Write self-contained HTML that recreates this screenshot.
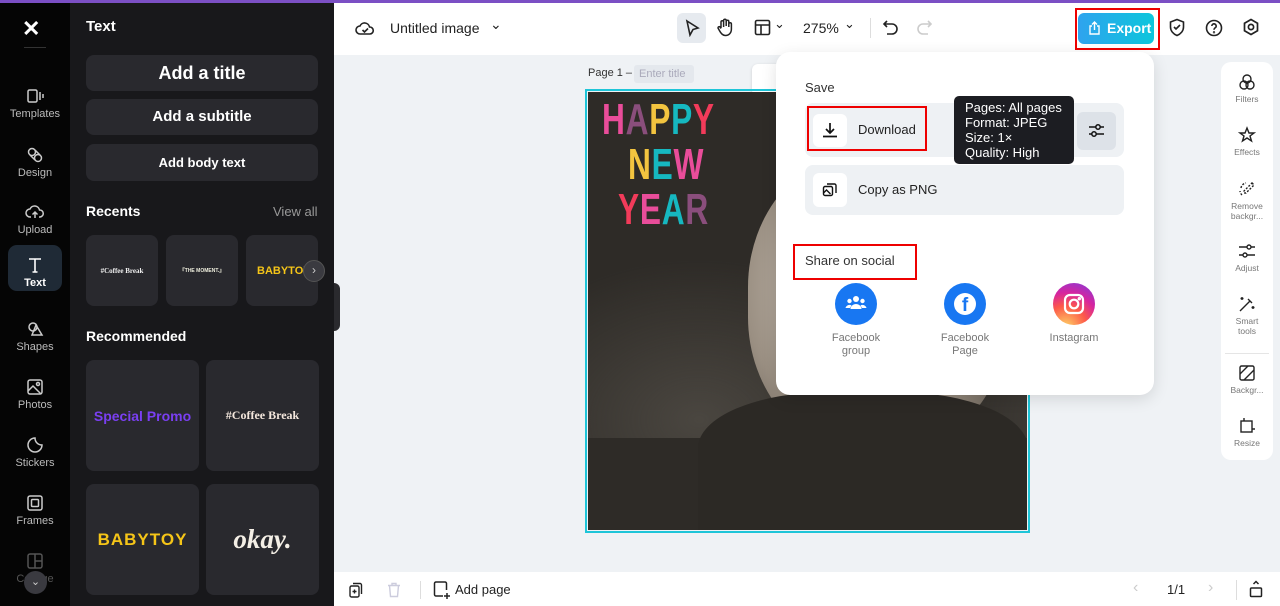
<!DOCTYPE html>
<html><head><meta charset="utf-8"><style>
*{box-sizing:border-box;margin:0;padding:0}
body{width:1280px;height:606px;overflow:hidden;font-family:"Liberation Sans",sans-serif;position:relative;background:#eff2f5}
.abs{position:absolute}
.rail{left:0;top:0;width:70px;height:606px;background:#050505}
.panel{left:70px;top:0;width:264px;height:606px;background:#18181b;color:#fff}
.ri{position:absolute;left:0;width:70px;text-align:center;color:#bbb;font-size:11px}
.ri svg{display:block;margin:0 auto 3px}
.btn{position:absolute;left:16px;width:232px;background:#29292e;border-radius:8px;color:#fff;font-weight:bold;text-align:center}
.card{position:absolute;background:#29292e;border-radius:8px;display:flex;align-items:center;justify-content:center;font-weight:bold}
.hdr{left:334px;top:3px;width:946px;height:52px;background:#fff}
.bot{left:334px;top:572px;width:946px;height:34px;background:#fff}
.rt{position:absolute;left:0;width:52px;text-align:center;font-size:8.5px;color:#777;line-height:10px}
.rt svg{display:block;margin:0 auto 3px}
.hny{position:absolute;font:bold 44px 'Liberation Sans';letter-spacing:1px;line-height:45px;transform:scaleX(0.72);transform-origin:0 0;white-space:nowrap}
</style></head><body>
<div class="abs" style="left:0;top:0;width:1280px;height:3px;background:#7b4fc4;z-index:5"></div>
<div class="abs rail">
 <div class="abs" style="left:22px;top:16px;color:#fff;font-size:22px;font-weight:bold">✕</div>
 <div class="abs" style="left:24px;top:47px;width:22px;height:1px;background:#333"></div>
 <div class="ri" style="top:87px"><svg width="18" height="18" viewBox="0 0 18 18" fill="none" stroke="#ccc" stroke-width="1.5"><rect x="2" y="3" width="9" height="12" rx="1.5"/><path d="M14 5v8M17 7v4"/></svg>Templates</div>
 <div class="ri" style="top:146px"><svg width="18" height="18" viewBox="0 0 18 18" fill="none" stroke="#ccc" stroke-width="1.5"><circle cx="6" cy="6" r="3.5"/><circle cx="12" cy="12" r="3.5"/><path d="M9 4l5 5M4 9l5 5"/></svg>Design</div>
 <div class="ri" style="top:203px"><svg width="20" height="18" viewBox="0 0 20 18" fill="none" stroke="#ccc" stroke-width="1.5"><path d="M6 14H5a4 4 0 010-8 5 5 0 019.5 1A3.5 3.5 0 0115 14h-1M10 15V9M7.5 11.5L10 9l2.5 2.5"/></svg>Upload</div>
 <div class="abs" style="left:8px;top:245px;width:54px;height:46px;border-radius:9px;background:#1f2a36"></div>
 <div class="ri" style="top:256px;color:#fff;font-weight:bold"><svg width="18" height="18" viewBox="0 0 18 18" fill="none" stroke="#fff" stroke-width="1.6"><path d="M3 3h12M9 3v13M6.5 16h5"/></svg>Text</div>
 <div class="ri" style="top:320px"><svg width="18" height="18" viewBox="0 0 18 18" fill="none" stroke="#ccc" stroke-width="1.5"><circle cx="7" cy="7" r="4"/><path d="M10 5l6 10H6z"/></svg>Shapes</div>
 <div class="ri" style="top:378px"><svg width="18" height="18" viewBox="0 0 18 18" fill="none" stroke="#ccc" stroke-width="1.5"><rect x="2" y="2" width="14" height="14" rx="2"/><path d="M2 13l5-5 8 8"/><circle cx="12" cy="6" r="1.5"/></svg>Photos</div>
 <div class="ri" style="top:436px"><svg width="18" height="18" viewBox="0 0 18 18" fill="none" stroke="#ccc" stroke-width="1.5"><path d="M16 9a7 7 0 11-7-7c0 4 3 7 7 7z"/></svg>Stickers</div>
 <div class="ri" style="top:494px"><svg width="18" height="18" viewBox="0 0 18 18" fill="none" stroke="#ccc" stroke-width="1.5"><rect x="2" y="2" width="14" height="14" rx="2"/><rect x="5.5" y="5.5" width="7" height="7" rx="1"/></svg>Frames</div>
 <div class="ri" style="top:552px;color:#555"><svg width="18" height="18" viewBox="0 0 18 18" fill="none" stroke="#555" stroke-width="1.5"><rect x="2" y="2" width="14" height="14" rx="2"/><path d="M9 2v14M9 9h7"/></svg>Collage</div>
 <div class="abs" style="left:24px;top:571px;width:23px;height:23px;border-radius:50%;background:#3a3a40;color:#ccc;font-size:11px;text-align:center;line-height:22px">⌄</div>
</div>
<div class="abs panel">
 <div class="abs" style="left:16px;top:18px;font-size:15px;font-weight:bold">Text</div>
 <div class="btn" style="top:55px;height:36px;line-height:36px;font-size:18px">Add a title</div>
 <div class="btn" style="top:99px;height:36px;line-height:36px;font-size:15px">Add a subtitle</div>
 <div class="btn" style="top:144px;height:37px;line-height:37px;font-size:13px">Add body text</div>
 <div class="abs" style="left:16px;top:203px;font-size:14px;font-weight:bold">Recents</div>
 <div class="abs" style="left:203px;top:204px;font-size:13px;color:#999">View all</div>
 <div class="card" style="left:16px;top:235px;width:72px;height:71px;font-size:7px;font-family:'Liberation Serif',serif;color:#eee">#Coffee Break</div>
 <div class="card" style="left:96px;top:235px;width:72px;height:71px;font-size:5px;color:#eed">『THE MOMENT.』</div>
 <div class="card" style="left:176px;top:235px;width:72px;height:71px;font-size:11px;color:#f5c518;justify-content:flex-start;padding-left:11px;overflow:hidden">BABYTOY</div>
 <div class="abs" style="left:233px;top:260px;width:22px;height:22px;border-radius:50%;background:#3a3a40;border:1px solid #555;color:#ccc;text-align:center;line-height:19px;font-size:12px">›</div>
 <div class="abs" style="left:16px;top:328px;font-size:14px;font-weight:bold">Recommended</div>
 <div class="card" style="left:16px;top:360px;width:113px;height:111px;color:#7a3ff2;font-size:14px">Special Promo</div>
 <div class="card" style="left:136px;top:360px;width:113px;height:111px;font-family:'Liberation Serif',serif;font-size:12px;color:#f3e6dc">#Coffee Break</div>
 <div class="card" style="left:16px;top:484px;width:113px;height:111px;color:#f5c518;font-size:17px;letter-spacing:1px">BABYTOY</div>
 <div class="card" style="left:136px;top:484px;width:113px;height:111px;color:#f4efe6;font-size:27px;font-family:'Liberation Serif',serif;font-style:italic">okay.</div>
</div>
<div class="abs" style="left:334px;top:283px;width:6px;height:48px;background:#2a2a2e;border-radius:0 6px 6px 0"></div>
<div class="abs hdr">
 <svg class="abs" style="left:21px;top:16px" width="20" height="18" viewBox="0 0 20 18" fill="none" stroke="#222" stroke-width="1.6"><path d="M6 15H5a4 4 0 010-8 5 5 0 019.5 1A3.5 3.5 0 0115 15zM7.5 11l2 2 3.5-3.5"/></svg>
 <div class="abs" style="left:56px;top:17px;font-size:14px;color:#222">Untitled image</div>
 <div class="abs" style="left:156px;top:13px;font-size:14px;color:#222">⌄</div>
 <div class="abs" style="left:343px;top:10px;width:29px;height:30px;border-radius:6px;background:#e6eaef"></div>
 <svg class="abs" style="left:349px;top:16px" width="18" height="18" viewBox="0 0 18 18" fill="none" stroke="#222" stroke-width="1.6"><path d="M4 2l11 7-5 1.5L7 16z"/></svg>
 <svg class="abs" style="left:382px;top:15px" width="18" height="19" viewBox="0 0 18 19" fill="none" stroke="#222" stroke-width="1.5"><path d="M5 10V4a1.3 1.3 0 012.6 0v5M7.6 8V2.5a1.3 1.3 0 012.6 0V8M10.2 8V3.5a1.3 1.3 0 012.6 0V9M12.8 9V6a1.3 1.3 0 012.6 0v5c0 4-2.5 6.5-6 6.5-3 0-4.5-2-6-5L2 10a1.2 1.2 0 012-1l1 1.5"/></svg>
 <svg class="abs" style="left:420px;top:16px" width="17" height="17" viewBox="0 0 17 17" fill="none" stroke="#222" stroke-width="1.6"><rect x="1.5" y="1.5" width="14" height="14" rx="1.5"/><path d="M1.5 6h14M7 6v9.5"/></svg>
 <div class="abs" style="left:440px;top:13px;font-size:13px;color:#222">⌄</div>
 <div class="abs" style="left:469px;top:17px;font-size:14px;color:#222">275%</div>
 <div class="abs" style="left:510px;top:13px;font-size:13px;color:#222">⌄</div>
 <div class="abs" style="left:536px;top:15px;width:1px;height:20px;background:#ddd"></div>
 <svg class="abs" style="left:548px;top:16px" width="17" height="17" viewBox="0 0 17 17" fill="none" stroke="#222" stroke-width="1.6"><path d="M5 2L2 5l3 3M2 5h8a5 5 0 010 10H5"/></svg>
 <svg class="abs" style="left:582px;top:16px" width="17" height="17" viewBox="0 0 17 17" fill="none" stroke="#ccc" stroke-width="1.6"><path d="M12 2l3 3-3 3M15 5H7a5 5 0 000 10h5"/></svg>
 <div class="abs" style="left:741px;top:5px;width:85px;height:42px;border:2px solid #e00"></div>
 <div class="abs" style="left:744px;top:10px;width:76px;height:31px;border-radius:6px;background:linear-gradient(90deg,#2fa3ee,#0cc6dc);color:#fff;font-weight:bold;font-size:14px;line-height:31px;padding-left:29px">Export</div>
 <svg class="abs" style="left:754px;top:18px" width="13" height="14" viewBox="0 0 13 14" fill="none" stroke="#fff" stroke-width="1.4"><path d="M4 5H2v8h9V5H9M6.5 9V1M4 3.5L6.5 1 9 3.5"/></svg>
 <svg class="abs" style="left:834px;top:15px" width="18" height="19" viewBox="0 0 18 19" fill="none" stroke="#222" stroke-width="1.6"><path d="M9 1.5l6.5 2.5v5c0 4-3 7-6.5 8.5C5.5 16 2.5 13 2.5 9V4z"/><path d="M6 9l2 2 4-4"/></svg>
 <svg class="abs" style="left:871px;top:16px" width="18" height="18" viewBox="0 0 18 18" fill="none" stroke="#222" stroke-width="1.6"><circle cx="9" cy="9" r="7.5"/><path d="M6.8 7a2.2 2.2 0 114 1.3c-1 .7-1.8 1.2-1.8 2.5"/><circle cx="9" cy="13.3" r=".4"/></svg>
 <svg class="abs" style="left:908px;top:15px" width="18" height="19" viewBox="0 0 18 19" fill="none" stroke="#222" stroke-width="1.7"><path d="M9 1.5l6.5 3.75v7.5L9 16.5 2.5 12.75v-7.5z"/><circle cx="9" cy="9" r="2.6"/></svg>
</div>
<div class="abs" style="left:588px;top:67px;font-size:11px;color:#333">Page 1 –</div>
<div class="abs" style="left:634px;top:65px;width:60px;height:18px;background:#e4e8ed;border-radius:3px;font-size:11px;color:#aab;line-height:18px;padding-left:5px">Enter title</div>
<div class="abs" style="left:752px;top:64px;width:30px;height:32px;background:#fff;border-radius:6px;box-shadow:0 1px 3px rgba(0,0,0,.15)"></div>
<div class="abs" style="left:585px;top:89px;width:445px;height:444px;border:2px solid #1ec5d8"></div>
<div class="abs" style="left:588px;top:92px;width:439px;height:438px;background:radial-gradient(ellipse 140px 200px at 790px 300px,#cfc6bb,#8d8275 55%,transparent 80%),radial-gradient(ellipse 220px 160px at 260px 420px,#4a4640,transparent),#2e2b27;background-position:-588px -92px;overflow:hidden">
 <div style="position:absolute;left:160px;top:60px;width:260px;height:300px;border-radius:45%;background:radial-gradient(ellipse at 45% 45%,#d8d0c6,#9a8f82 60%,#4a443d)"></div>
 <div style="position:absolute;left:110px;top:300px;width:330px;height:140px;background:#2c2925;border-radius:40% 40% 0 0"></div>
 <div class="hny" style="left:14px;top:5px"><span style="color:#e94d9a">H</span><span style="color:#8a4e7c">A</span><span style="color:#f3c43f">P</span><span style="color:#16b8c0">P</span><span style="color:#f23b5a">Y</span></div>
 <div class="hny" style="left:40px;top:50px"><span style="color:#f3c43f">N</span><span style="color:#16b8c0">E</span><span style="color:#e94d9a">W</span></div>
 <div class="hny" style="left:30px;top:95px"><span style="color:#f23b5a">Y</span><span style="color:#e94d9a">E</span><span style="color:#16b8c0">A</span><span style="color:#8a4e7c">R</span></div>
</div>
<div class="abs" style="left:776px;top:52px;width:378px;height:343px;background:#fff;border-radius:14px;box-shadow:0 4px 16px rgba(0,0,0,.12)">
 <div class="abs" style="left:29px;top:28px;font-size:13px;color:#333">Save</div>
 <div class="abs" style="left:29px;top:51px;width:319px;height:54px;background:#eef1f4;border-radius:8px"></div>
 <div class="abs" style="left:31px;top:54px;width:120px;height:45px;border:2px solid #e00"></div>
 <div class="abs" style="left:37px;top:62px;width:34px;height:33px;background:#fff;border-radius:6px"></div>
 <svg class="abs" style="left:45px;top:69px" width="18" height="18" viewBox="0 0 18 18" fill="none" stroke="#111" stroke-width="1.7"><path d="M9 2v10M5 8l4 4 4-4M2 15.5h14"/></svg>
 <div class="abs" style="left:82px;top:70px;font-size:13px;color:#222">Download</div>
 <div class="abs" style="left:301px;top:60px;width:39px;height:38px;background:#dde2e8;border-radius:6px"></div>
 <svg class="abs" style="left:312px;top:70px" width="17" height="17" viewBox="0 0 17 17" fill="none" stroke="#111" stroke-width="1.5"><path d="M1 5h15M1 12h15"/><circle cx="10" cy="5" r="2.2" fill="#dde2e8"/><circle cx="6" cy="12" r="2.2" fill="#dde2e8"/></svg>
 <div class="abs" style="left:29px;top:113px;width:319px;height:50px;background:#eef1f4;border-radius:8px"></div>
 <div class="abs" style="left:37px;top:121px;width:34px;height:34px;background:#fff;border-radius:6px"></div>
 <svg class="abs" style="left:46px;top:130px" width="16" height="16" viewBox="0 0 16 16" fill="none" stroke="#111" stroke-width="1.4"><rect x="1.5" y="4.5" width="9" height="9" rx="1.5"/><path d="M5 2h7.5a1.5 1.5 0 011.5 1.5V11"/><path d="M1.5 11l3-3 4 4"/></svg>
 <div class="abs" style="left:82px;top:130px;font-size:13px;color:#222">Copy as PNG</div>
 <div class="abs" style="left:17px;top:192px;width:124px;height:36px;border:2px solid #e00"></div>
 <div class="abs" style="left:29px;top:201px;font-size:13px;color:#333">Share on social</div>
 <div class="abs" style="left:59px;top:231px;width:42px;height:42px;border-radius:50%;background:#1877f2"></div>
 <svg class="abs" style="left:69px;top:242px" width="22" height="18" viewBox="0 0 22 18" fill="#fff"><circle cx="11" cy="5" r="3"/><circle cx="4.5" cy="7" r="2.2"/><circle cx="17.5" cy="7" r="2.2"/><path d="M5.5 15a5.5 5 0 0111 0zM0.5 14a4 4 0 016-2.5L5 14zM21.5 14a4 4 0 00-6-2.5L17 14z"/></svg>
 <div class="abs" style="left:40px;top:280px;width:80px;text-align:center;font-size:11px;color:#777;line-height:13px">Facebook<br>group</div>
 <div class="abs" style="left:168px;top:231px;width:42px;height:42px;border-radius:50%;background:#1877f2"></div>
 <div class="abs" style="left:178px;top:241px;width:22px;height:22px;border-radius:50%;background:#fff;color:#1877f2;font:bold 19px 'Liberation Sans';text-align:center;line-height:26px;overflow:hidden">f</div>
 <div class="abs" style="left:149px;top:280px;width:80px;text-align:center;font-size:11px;color:#777;line-height:13px">Facebook<br>Page</div>
 <div class="abs" style="left:277px;top:231px;width:42px;height:42px;border-radius:50%;background:radial-gradient(circle at 30% 105%,#fdd466 0%,#fd5949 40%,#d6249f 65%,#7a3ee0 100%)"></div>
 <svg class="abs" style="left:286px;top:240px" width="24" height="24" viewBox="0 0 24 24" fill="none" stroke="#fff" stroke-width="2.2"><rect x="3" y="3" width="18" height="18" rx="5"/><circle cx="12" cy="12" r="4.3"/><circle cx="17.3" cy="6.7" r=".6" fill="#fff"/></svg>
 <div class="abs" style="left:258px;top:280px;width:80px;text-align:center;font-size:11px;color:#777">Instagram</div>
</div>
<div class="abs" style="left:954px;top:96px;width:120px;height:68px;background:#1c1d22;border-radius:5px;color:#fff;font-size:13px;line-height:15px;padding:4px 0 0 11px">Pages: All pages<br>Format: JPEG<br>Size: 1×<br>Quality: High</div>
<div class="abs" style="left:1221px;top:62px;width:52px;height:398px;background:#fff;border-radius:10px">
 <div class="rt" style="top:11px"><svg width="18" height="18" viewBox="0 0 18 18" fill="none" stroke="#222" stroke-width="1.4"><circle cx="9" cy="6" r="4"/><circle cx="6" cy="12" r="4"/><circle cx="12" cy="12" r="4"/></svg>Filters</div>
 <div class="rt" style="top:64px"><svg width="18" height="18" viewBox="0 0 18 18" fill="none" stroke="#222" stroke-width="1.4"><path d="M9 2l2 5h5l-4 3 1.5 5L9 12l-4.5 3L6 10 2 7h5z"/></svg>Effects</div>
 <div class="rt" style="top:118px"><svg width="18" height="18" viewBox="0 0 18 18" fill="none" stroke="#222" stroke-width="1.4"><path d="M14 3l2 2-8 8H6v-2zM3 8a6 6 0 015-5M4 15a6 6 0 01-2-4" stroke-dasharray="2 1.5"/></svg>Remove<br>backgr...</div>
 <div class="rt" style="top:180px"><svg width="18" height="18" viewBox="0 0 18 18" fill="none" stroke="#222" stroke-width="1.4"><path d="M1 5h16M1 13h16"/><circle cx="11" cy="5" r="2" fill="#fff"/><circle cx="7" cy="13" r="2" fill="#fff"/></svg>Adjust</div>
 <div class="rt" style="top:233px"><svg width="18" height="18" viewBox="0 0 18 18" fill="none" stroke="#222" stroke-width="1.4"><path d="M2 16L12 6M10 4l4 4M4 2v3M2.5 3.5h3M15 11v3M13.5 12.5h3"/></svg>Smart<br>tools</div>
 <div class="abs" style="left:4px;top:291px;width:44px;height:1px;background:#e5e5e5"></div>
 <div class="rt" style="top:302px"><svg width="18" height="18" viewBox="0 0 18 18" fill="none" stroke="#222" stroke-width="1.4"><rect x="2" y="2" width="14" height="14" rx="1.5"/><path d="M2 10l8-8M6 16l10-10"/></svg>Backgr...</div>
 <div class="rt" style="top:355px"><svg width="18" height="18" viewBox="0 0 18 18" fill="none" stroke="#222" stroke-width="1.4"><rect x="3" y="4" width="11" height="11"/><path d="M6 1v3M14 12h3"/></svg>Resize</div>
</div>
<div class="abs bot">
 <svg class="abs" style="left:15px;top:10px" width="15" height="16" viewBox="0 0 15 16" fill="none" stroke="#222" stroke-width="1.4"><rect x="1" y="4" width="9" height="11" rx="1.5"/><path d="M4 1.5h7a1.5 1.5 0 011.5 1.5v9M5.5 7.5v4M3.5 9.5h4"/></svg>
 <svg class="abs" style="left:53px;top:10px" width="14" height="16" viewBox="0 0 14 16" fill="none" stroke="#ccd" stroke-width="1.4"><path d="M1 3.5h12M5 3.5V1.5h4v2M2.5 3.5l1 11h7l1-11"/></svg>
 <div class="abs" style="left:86px;top:9px;width:1px;height:18px;background:#ddd"></div>
 <svg class="abs" style="left:99px;top:9px" width="18" height="18" viewBox="0 0 18 18" fill="none" stroke="#222" stroke-width="1.5"><path d="M10 15H3a1.5 1.5 0 01-1.5-1.5v-11A1.5 1.5 0 013 1h9a1.5 1.5 0 011.5 1.5V9M14 12v6M11 15h6"/></svg>
 <div class="abs" style="left:121px;top:10px;font-size:13px;color:#222">Add page</div>
 <div class="abs" style="left:799px;top:7px;font-size:16px;color:#ccc">‹</div>
 <div class="abs" style="left:833px;top:10px;font-size:13px;color:#222">1/1</div>
 <div class="abs" style="left:874px;top:7px;font-size:16px;color:#ccc">›</div>
 <div class="abs" style="left:902px;top:8px;width:1px;height:20px;background:#ddd"></div>
 <svg class="abs" style="left:915px;top:8px" width="14" height="18" viewBox="0 0 14 18" fill="none" stroke="#222" stroke-width="1.5"><rect x="1.5" y="8" width="11" height="8.5" rx="1"/><path d="M4.5 4L7 1.5 9.5 4"/></svg>
</div>
</body></html>
